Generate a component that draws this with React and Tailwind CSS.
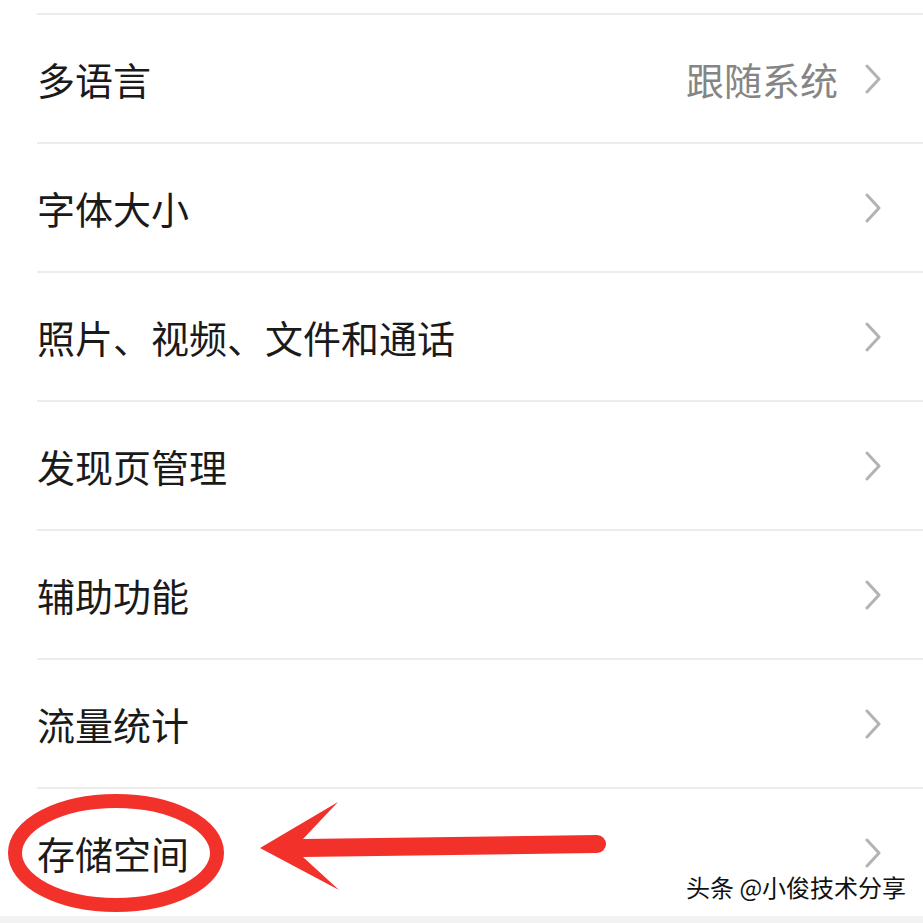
import React from 'react';

const rows = [
    { label: '多语言', value: '跟随系统' },
    { label: '字体大小' },
    { label: '照片、视频、文件和通话' },
    { label: '发现页管理' },
    { label: '辅助功能' },
    { label: '流量统计' },
    { label: '存储空间' },
];

const Chevron = () => (
    <svg width="18" height="30" viewBox="0 0 18 30" className="shrink-0">
        <path d="M3 2 L15 15 L3 28" fill="none" stroke="#b3b3b3" strokeWidth="3" strokeLinecap="round" strokeLinejoin="round" />
    </svg>
);

const App = () => {
    return (
        <div
            className="relative w-[923px] h-[923px] bg-white overflow-hidden flex flex-col"
            style={{ fontFamily: '"Noto Sans CJK SC", "Noto Sans", sans-serif' }}
        >
            <div className="h-[13px] shrink-0" />
            {rows.map(({ label, value }) => (
                <div key={label} className="h-[129px] shrink-0 ml-[37px] border-t-2 border-[#ececec] flex items-center pr-[41px]">
                    <span className="text-[38px] text-[#1a1a1a] leading-none flex-1">{label}</span>
                    {value && <span className="text-[38px] text-[#858585] leading-none mr-[26px]">{value}</span>}
                    <Chevron />
                </div>
            ))}
            <div className="flex-1 bg-[#f2f2f2]" />

            {/* annotation: red ellipse and arrow */}
            <svg className="absolute left-0 top-0 pointer-events-none" width="923" height="923" viewBox="0 0 923 923">
                <ellipse cx="116" cy="853" rx="101" ry="52" fill="none" stroke="#f2312b" strokeWidth="14" />
                <path d="M597 835 L303 839 L338 802 L260 848 L339 890 L303 857 L597 853 Z" fill="#f2312b" strokeLinejoin="round" />
                <circle cx="597" cy="844" r="9" fill="#f2312b" />
            </svg>

            <div
                className="absolute left-[686px] top-[875px] text-[24px] leading-none text-[#111]"
                style={{ textShadow: '0 0 2px #fff, 0 0 2px #fff, 1px 1px 0 #fff, -1px -1px 0 #fff' }}
            >
                头条 @小俊技术分享
            </div>
        </div>
    );
};

export default App;
